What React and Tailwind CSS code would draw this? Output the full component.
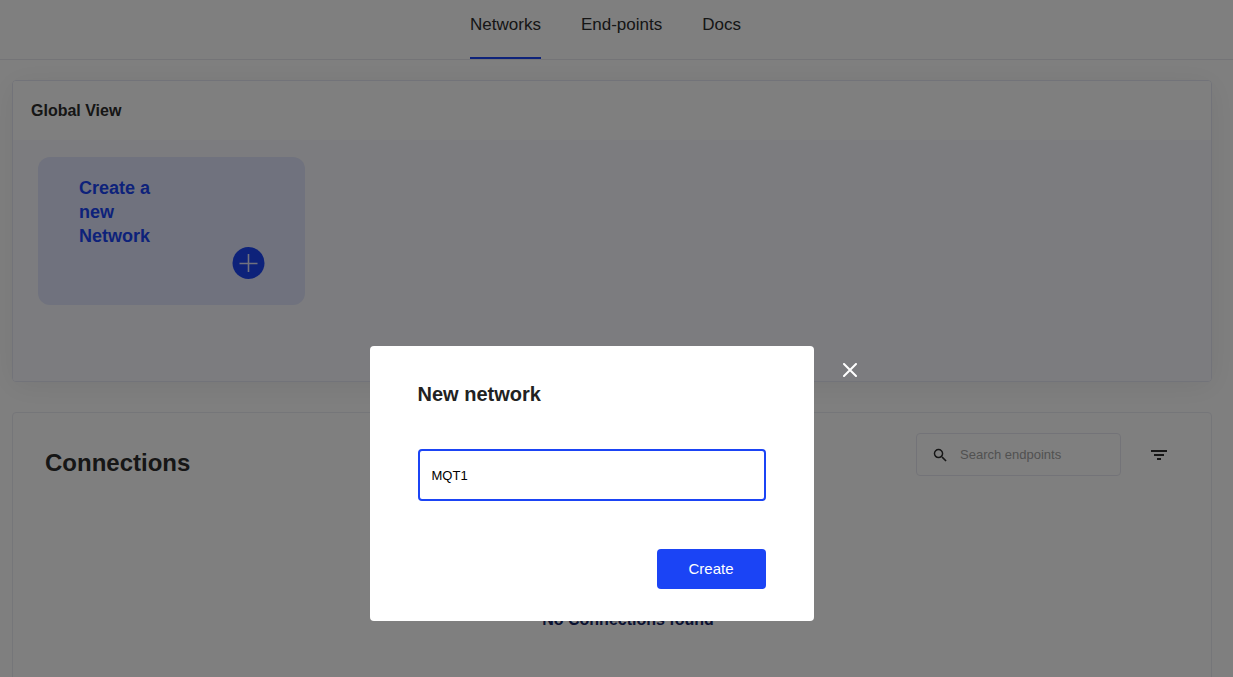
import { useState } from "react";

function Nav() {
  const links = ["Networks", "End-points", "Docs"];
  return (
    <header className="border-b border-[#e8e9ee]">
      <nav className="flex h-[59px] justify-center gap-10 pr-[22px] text-[17px] leading-6 text-[#2c2c2c]">
        {links.map((label, i) => (
          <a
            key={label}
            href={"#" + label.toLowerCase()}
            className={
              i === 0
                ? "border-b-2 border-[#1b44f5] pt-[13px]"
                : "border-b-2 border-transparent pt-[13px]"
            }
          >
            {label}
          </a>
        ))}
      </nav>
    </header>
  );
}

function GlobalView() {
  return (
    <section className="overflow-hidden rounded border border-[#e4e6f2] shadow-[0_4px_30px_rgba(0,0,0,0.07)]">
      <h2 className="bg-white px-[18px] pt-[18px] pb-[17px] text-base leading-6 font-bold text-[#2c2c2c]">
        Global View
      </h2>
      <div className="h-[241px] bg-[#f9f9fe] px-[25px] pt-[17px]">
        <button
          type="button"
          className="flex h-[148px] w-[267px] flex-col rounded-xl bg-[#e0e5fc] px-[41px] pt-[19px] text-left"
        >
          <span className="w-20 text-lg leading-6 font-bold text-[#1b44f5]">
            Create a new Network
          </span>
          <svg className="-mt-px -mr-px self-end" width="33" height="32" viewBox="0 0 33 32" aria-hidden="true">
            <circle cx="16.5" cy="16" r="16" fill="#1b44f5" />
            <path d="M7.5 16.5h18M16.5 7v18" stroke="#e0e5fc" strokeWidth="1.6" />
          </svg>
        </button>
      </div>
    </section>
  );
}

function Connections() {
  return (
    <section className="min-h-[420px] rounded border border-[#ebecf2] bg-white">
      <div className="flex items-start pt-5 pr-11 pl-8">
        <h2 className="flex-1 pt-[14px] text-2xl leading-8 font-bold text-[#2c2c2c]">Connections</h2>
        <label className="flex h-[43px] w-[205px] items-center rounded border border-[#e6e7f0] pl-4">
          <svg width="14" height="14" viewBox="2 2 19 19" fill="#2c2c2c" aria-hidden="true">
            <path d="M15.5 14h-.79l-.28-.27A6.47 6.47 0 0 0 16 9.5 6.5 6.5 0 1 0 9.5 16c1.61 0 3.09-.59 4.23-1.57l.27.28v.79l5 4.99L20.49 19zm-6 0C7.01 14 5 11.99 5 9.5S7.01 5 9.5 5 14 7.01 14 9.5 11.99 14 9.5 14" />
          </svg>
          <input
            type="search"
            aria-label="Search endpoints"
            placeholder="Search endpoints"
            className="ml-[13px] w-36 min-w-0 bg-transparent text-[13px] outline-none placeholder:text-[#a3a3a3]"
          />
        </label>
        <button type="button" aria-label="Filter" className="ml-[30px] flex h-[43px] items-center">
          <svg width="16" height="10" viewBox="0 0 16 10" fill="#2c2c2c" aria-hidden="true">
            <path d="M0 0h16v2H0zM3 4h10v2H3zM6 8h4v2H6z" />
          </svg>
        </button>
      </div>
      <p className="mt-[129px] pl-8 text-center text-base leading-6 font-bold text-[#152563]">
        No Connections found
      </p>
    </section>
  );
}

function NewNetworkDialog() {
  const [name, setName] = useState("MQT1");
  return (
    <div className="fixed inset-0 flex items-start justify-center overflow-auto bg-black/50 pt-[346px]">
      <form
        role="dialog"
        aria-labelledby="dialog-title"
        onSubmit={(e) => e.preventDefault()}
        className="flex w-[444px] flex-col rounded bg-white px-12 pt-8 pb-8"
      >
        <h2 id="dialog-title" className="text-xl leading-8 font-bold text-[#222222]">
          New network
        </h2>
        <input
          aria-label="Network name"
          value={name}
          onChange={(e) => setName(e.target.value)}
          className="mt-[39px] h-[52px] rounded border-2 border-[#1b44f5] px-3 text-[13px] text-black outline-none"
        />
        <button
          type="submit"
          className="mt-12 h-10 w-[109px] self-end rounded bg-[#1b44f5] text-[15px] text-white"
        >
          Create
        </button>
      </form>
      <button type="button" aria-label="Close" className="mt-3 mr-0.5 ml-6 flex size-6 items-center justify-center">
        <svg width="14" height="14" viewBox="0 0 14 14" aria-hidden="true">
          <path d="M1 1l12 12M13 1L1 13" stroke="#fff" strokeWidth="2" strokeLinecap="round" />
        </svg>
      </button>
    </div>
  );
}

export default function App() {
  return (
    <div className="h-screen overflow-hidden bg-white font-['Liberation_Sans',sans-serif]">
      <Nav />
      <main className="flex flex-col gap-[30px] pt-5 pr-[21px] pl-3">
        <GlobalView />
        <Connections />
      </main>
      <NewNetworkDialog />
    </div>
  );
}
